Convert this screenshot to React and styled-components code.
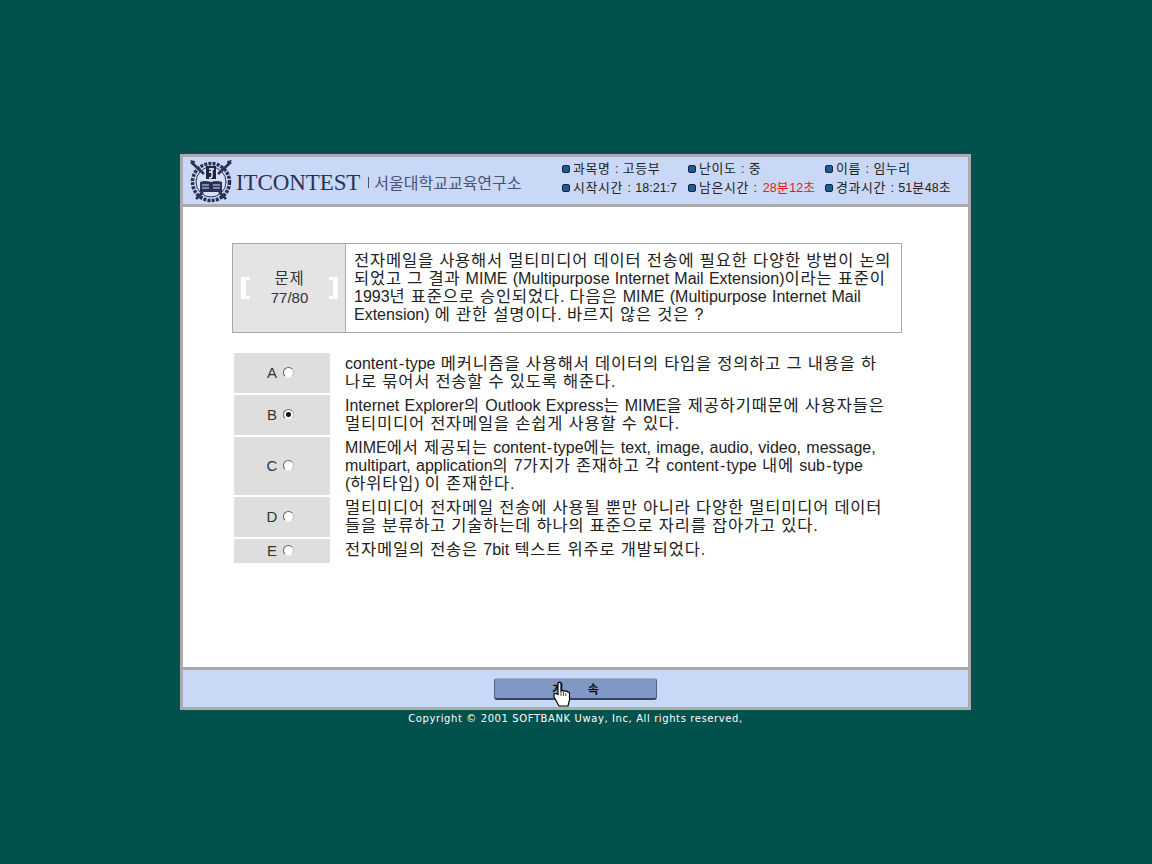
import styled, { createGlobalStyle } from 'styled-components'

const Global = createGlobalStyle`
  html, body {
    margin: 0;
    height: 100%;
    background: #01524d;
    font-family: "Liberation Sans", "Noto Sans CJK KR", sans-serif;
  }
`

const Page = styled.div`
  width: 1152px;
  height: 864px;
  padding-top: 154px;
  box-sizing: border-box;
  overflow: hidden;
  display: flex;
  flex-direction: column;
  align-items: center;
`

const Frame = styled.div`
  box-sizing: border-box;
  width: 791px;
  height: 556px;
  margin-left: -1px;
  border: 3px solid #a9acab;
  background: #fff;
  display: flex;
  flex-direction: column;
`

const Header = styled.div`
  height: 47px;
  background: #c9d8f6;
  border-bottom: 3px solid #a9acab;
  display: flex;
  flex: none;
`

const LogoArea = styled.div`
  width: 348px;
  padding-left: 6px;
  box-sizing: border-box;
  display: flex;
  align-items: center;
  flex: none;
`

const Brand = styled.span`
  font-family: "Liberation Serif", serif;
  font-size: 23px;
  color: #2a3157;
  margin: 4px 0 0 3px;
  letter-spacing: -0.1px;
`

const Institute = styled.span`
  font-family: "Noto Sans CJK KR", sans-serif;
  font-size: 16px;
  line-height: 20px;
  color: #4a5175;
  margin: 2px 0 0 8px;
  padding-left: 6px;
  position: relative;
  &::before {
    content: '';
    position: absolute;
    left: 0;
    top: 5px;
    height: 11px;
    width: 1px;
    background: #4a5175;
  }
`

const InfoGrid = styled.div`
  display: grid;
  grid-template-columns: 126px 137px auto;
  grid-template-rows: 19px 19px;
  align-content: center;
  padding: 0 0 4px 31px;
`

const Info = styled.div`
  display: flex;
  align-items: center;
  font-size: 12.5px;
  word-spacing: 1px;
  color: #222;
  white-space: pre;
`

const Bullet = styled.i`
  width: 6px;
  height: 6px;
  border-radius: 2px;
  background: #1d5c93;
  border: 1px solid #14233f;
  margin-right: 3px;
  flex: none;
`

const Red = styled.span`
  color: #f0141e;
  margin-left: 6px;
`

const Hangul = styled.span`
  font-size: 1.03em;
  line-height: 1;
  letter-spacing: 0.05em;
`

const Dash = styled.span`
  padding: 0 1.2px;
`

const Body = styled.div`
  flex: 1;
  padding: 36px 0 0 49px;
`

const Question = styled.div`
  box-sizing: border-box;
  width: 670px;
  height: 90px;
  border: 1px solid #a9a9a9;
  display: flex;
`

const QuestionLabel = styled.div`
  width: 113px;
  flex: none;
  background: #e4e4e4;
  border-right: 1px solid #a9a9a9;
  display: flex;
  align-items: center;
  justify-content: space-between;
  padding: 0 7px 0 8px;
  box-sizing: border-box;
  color: #333;
  font-size: 15px;
  line-height: 19px;
  text-align: center;
`

const Bracket = styled.span`
  width: 9px;
  height: 22px;
  border: solid #fff;
  border-width: ${({ $right }) => ($right ? '3px 5px 3px 0' : '3px 0 3px 5px')};
  box-sizing: border-box;
`

const QuestionText = styled.div`
  padding: 8px 0 0 8px;
  font-size: 16px;
  line-height: 18px;
  word-spacing: 0.8px;
  color: #222;
  white-space: nowrap;
`

const Options = styled.div`
  margin-top: 20px;
  margin-left: 2px;
  display: flex;
  flex-direction: column;
  gap: 2px;
`

const Option = styled.div`
  display: flex;
`

const OptionLabel = styled.label`
  width: 96px;
  flex: none;
  height: ${({ $h }) => $h}px;
  background: #dedede;
  display: flex;
  align-items: center;
  justify-content: center;
  gap: 6px;
  font-size: 15px;
  color: #333;
  padding: 0 3px 2px 0;
  box-sizing: border-box;
`

const Radio = styled.span`
  width: 11px;
  height: 11px;
  border-radius: 50%;
  background: #fff;
  border: 1px solid;
  border-color: #666 #bbb #eee #666;
  box-sizing: border-box;
  display: flex;
  align-items: center;
  justify-content: center;
  &::after {
    content: '';
    width: 5px;
    height: 5px;
    border-radius: 50%;
    background: ${({ $on }) => ($on ? '#111' : 'transparent')};
  }
`

const OptionText = styled.div`
  padding: 2px 0 0 15px;
  font-size: 16px;
  line-height: 18px;
  word-spacing: 0.8px;
  color: #222;
  white-space: nowrap;
`

const Footer = styled.div`
  flex: none;
  height: 37px;
  background: #c9d8f6;
  border-top: 3px solid #a9acab;
  display: flex;
  align-items: center;
  justify-content: center;
`

const NextButton = styled.button`
  width: 163px;
  height: 22px;
  background: #7f99c4;
  border: 1px solid #4d6487;
  border-top-color: #9fb0cc;
  border-bottom: 2px solid #33455f;
  border-radius: 3px;
  font-size: 12px;
  font-weight: 700;
  font-family: inherit;
  color: #111;
  padding: 0;
  word-spacing: 21px;
  position: relative;
`

const Cursor = styled.svg`
  position: absolute;
  left: 58px;
  top: 2px;
`

const Copyright = styled.div`
  margin: 3px 0 0 -1px;
  font-family: "DejaVu Sans", sans-serif;
  font-size: 10px;
  color: #fff;
  letter-spacing: 0.6px;
  white-space: nowrap;
`

const options = [
  { key: 'A', h: 40, lines: ['content-type 메커니즘을 사용해서 데이터의 타입을 정의하고 그 내용을 하', '나로 묶어서 전송할 수 있도록 해준다.'] },
  { key: 'B', h: 40, on: true, lines: ['Internet Explorer의 Outlook Express는 MIME을 제공하기때문에 사용자들은', '멀티미디어 전자메일을 손쉽게 사용할 수 있다.'] },
  { key: 'C', h: 58, lines: ['MIME에서 제공되는 content-type에는 text, image, audio, video, message,', 'multipart, application의 7가지가 존재하고 각 content-type 내에 sub-type', '(하위타입) 이 존재한다.'] },
  { key: 'D', h: 40, lines: ['멀티미디어 전자메일 전송에 사용될 뿐만 아니라 다양한 멀티미디어 데이터', '들을 분류하고 기술하는데 하나의 표준으로 자리를 잡아가고 있다.'] },
  { key: 'E', h: 24, lines: ['전자메일의 전송은 7bit 텍스트 위주로 개발되었다.'] },
]

const questionLines = [
  '전자메일을 사용해서 멀티미디어 데이터 전송에 필요한 다양한 방법이 논의',
  '되었고 그 결과 MIME (Multipurpose Internet Mail Extension)이라는 표준이',
  '1993년 표준으로 승인되었다. 다음은 MIME (Multipurpose Internet Mail',
  'Extension) 에 관한 설명이다. 바르지 않은 것은 ?',
]

// the original font has full-width hangul and a wide hyphen next to Arial-width latin
const Ko = ({ children }) =>
  children.split(/([가-힣]+|-)/).map((part, i) => {
    if (i % 2 === 0) return part
    return part === '-' ? <Dash key={i}>{part}</Dash> : <Hangul key={i}>{part}</Hangul>
  })

const Emblem = () => (
  <svg width="44" height="44" viewBox="0 0 44 44">
    <circle cx="22" cy="23" r="18.5" fill="none" stroke="#2a3157" strokeWidth="3.5" strokeDasharray="3 1.2" />
    <circle cx="22" cy="23" r="15" fill="#d5dff5" stroke="#2a3157" />
    <path d="M2 3 L15 15 M42 3 L29 15 M7 40 L14 33 M37 40 L30 33" stroke="#2a3157" strokeWidth="2.5" />
    <path d="M1 1 l5 1 l-1 5 z M43 1 l-5 1 l1 5 z" fill="#2a3157" />
    <path d="M17 7 h10 v13 h-10 z" fill="#1f2545" />
    <path d="M20 10 h5 M23 10 v7 q0 2 -3 2 M20 13 h3" stroke="#fff" strokeWidth="1.3" fill="none" />
    <path d="M11 23 q5 -2 11 0 q6 -2 11 0 v10 h-22 z" fill="#2a3157" />
    <path d="M13 26 h7 M24 26 h7 M13 29 h7 M24 29 h7" stroke="#d5dff5" />
  </svg>
)

export default function App() {
  return (
    <Page>
      <Global />
      <Frame>
        <Header>
          <LogoArea>
            <Emblem />
            <Brand>ITCONTEST</Brand>
            <Institute>서울대학교교육연구소</Institute>
          </LogoArea>
          <InfoGrid>
            <Info><Bullet /><Ko>과목명 : 고등부</Ko></Info>
            <Info><Bullet /><Ko>난이도 : 중</Ko></Info>
            <Info><Bullet /><Ko>이름 : 임누리</Ko></Info>
            <Info><Bullet /><Ko>시작시간 : 18:21:7</Ko></Info>
            <Info><Bullet /><Ko>남은시간 :</Ko><Red><Ko>28분12초</Ko></Red></Info>
            <Info><Bullet /><Ko>경과 시간 : 51분48초</Ko></Info>
          </InfoGrid>
        </Header>
        <Body>
          <Question>
            <QuestionLabel>
              <Bracket />
              <div><Ko>문제</Ko><br />77/80</div>
              <Bracket $right />
            </QuestionLabel>
            <QuestionText>
              {questionLines.map((l) => <div key={l}><Ko>{l}</Ko></div>)}
            </QuestionText>
          </Question>
          <Options>
            {options.map((o) => (
              <Option key={o.key}>
                <OptionLabel $h={o.h}>{o.key}<Radio $on={o.on} /></OptionLabel>
                <OptionText>
                  {o.lines.map((l) => <div key={l}><Ko>{l}</Ko></div>)}
                </OptionText>
              </Option>
            ))}
          </Options>
        </Body>
        <Footer>
          <NextButton>
            계 속
            <Cursor width="18" height="26" viewBox="0 0 18 26">
              <path d="M5 2 q1.5 -1.5 3 0 V10 q1 -1 2.2 0 q1.2 -.8 2.2 .3 q1.3 -.6 2.4 .7 q1.4 -.2 1.7 1.2 V19 l-1.5 6 H6 L1 16 V13 q1 -1.2 4 .5 Z" fill="#fff" stroke="#000" strokeWidth="1.2" />
              <path d="M8 11 v4 M10.4 11 v4 M12.8 12 v3" stroke="#000" strokeWidth=".7" />
            </Cursor>
          </NextButton>
        </Footer>
      </Frame>
      <Copyright>Copyright © 2001 SOFTBANK Uway, Inc, All rights reserved,</Copyright>
    </Page>
  )
}
